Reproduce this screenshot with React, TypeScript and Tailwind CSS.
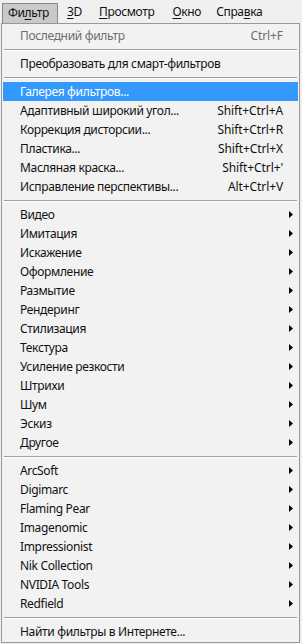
import React from 'react'

type Item = { label: string; shortcut?: string; sub?: boolean; disabled?: boolean; active?: boolean }
type Group = Item[]

const groups: Group[] = [
  [{ label: 'Последний фильтр', shortcut: 'Ctrl+F', disabled: true }],
  [{ label: 'Преобразовать для смарт-фильтров' }],
  [
    { label: 'Галерея фильтров...', active: true },
    { label: 'Адаптивный широкий угол...', shortcut: 'Shift+Ctrl+A' },
    { label: 'Коррекция дисторсии...', shortcut: 'Shift+Ctrl+R' },
    { label: 'Пластика...', shortcut: 'Shift+Ctrl+X' },
    { label: 'Масляная краска...', shortcut: "Shift+Ctrl+'" },
    { label: 'Исправление перспективы...', shortcut: 'Alt+Ctrl+V' },
  ],
  [
    'Видео', 'Имитация', 'Искажение', 'Оформление', 'Размытие', 'Рендеринг', 'Стилизация',
    'Текстура', 'Усиление резкости', 'Штрихи', 'Шум', 'Эскиз', 'Другое',
  ].map((label) => ({ label, sub: true })),
  [
    'ArcSoft', 'Digimarc', 'Flaming Pear', 'Imagenomic', 'Impressionist', 'Nik Collection',
    'NVIDIA Tools', 'Redfield',
  ].map((label) => ({ label, sub: true })),
  [{ label: 'Найти фильтры в Интернете...' }],
]

function Arrow() {
  return (
    <svg width="4" height="7" viewBox="0 0 4 7" className="block">
      <path d="M0 0 L4 3.5 L0 7 Z" fill="#000" />
    </svg>
  )
}

function Row({ it }: { it: Item }) {
  const color = it.active ? 'text-white' : it.disabled ? 'text-[#6d6d6d]' : 'text-[#111]'
  return (
    <div className={`flex items-center h-[19px] pl-[17px] pr-[15px] mx-[1px] ${it.active ? 'bg-[#3399ff]' : ''} ${color}`}>
      <div className="flex-1 whitespace-nowrap">{it.label}</div>
      {it.shortcut && <div className="whitespace-nowrap tracking-[-0.1px]">{it.shortcut}</div>}
      {it.sub && <div className="mr-[-10px]"><Arrow /></div>}
    </div>
  )
}

function Sep() {
  return (
    <div className="h-[9px] flex flex-col justify-center px-[2px]">
      <div className="h-px bg-[#a0a0a0]" />
      <div className="h-px bg-white" />
    </div>
  )
}

const U = ({ children }: { children: React.ReactNode }) => <span className="underline underline-offset-2">{children}</span>

export default function App() {
  return (
    <div className="w-[302px] h-[644px] bg-[#f0f0f0] text-[12px] tracking-[-0.34px] leading-none overflow-hidden" style={{ fontFamily: '"Noto Sans", "Open Sans", sans-serif' }}>
      <div className="relative h-[23px] flex items-end text-[#111]">
        <div className="ml-[2px] w-[56px] h-[20px] border border-b-0 border-[#8a8a8a] bg-[#c9c9c9] pl-[5px] pt-[3px] relative z-10">
          Фи<U>л</U>ьтр
        </div>
        <div className="flex h-[20px] pt-[3px]">
          <div className="ml-[9px]"><U>3</U>D</div>
          <div className="ml-[17px]"><U>П</U>росмотр</div>
          <div className="ml-[18px]"><U>О</U>кно</div>
          <div className="ml-[15px]">Спра<U>в</U>ка</div>
        </div>
      </div>
      <div className="ml-[1px] w-[299px] h-[620px] border border-[#979797] bg-[#f2f2f2] pt-[2px]">
        {groups.map((g, gi) => (
          <React.Fragment key={gi}>
            {gi > 0 && <Sep />}
            {g.map((it) => <Row key={it.label} it={it} />)}
          </React.Fragment>
        ))}
      </div>
    </div>
  )
}
